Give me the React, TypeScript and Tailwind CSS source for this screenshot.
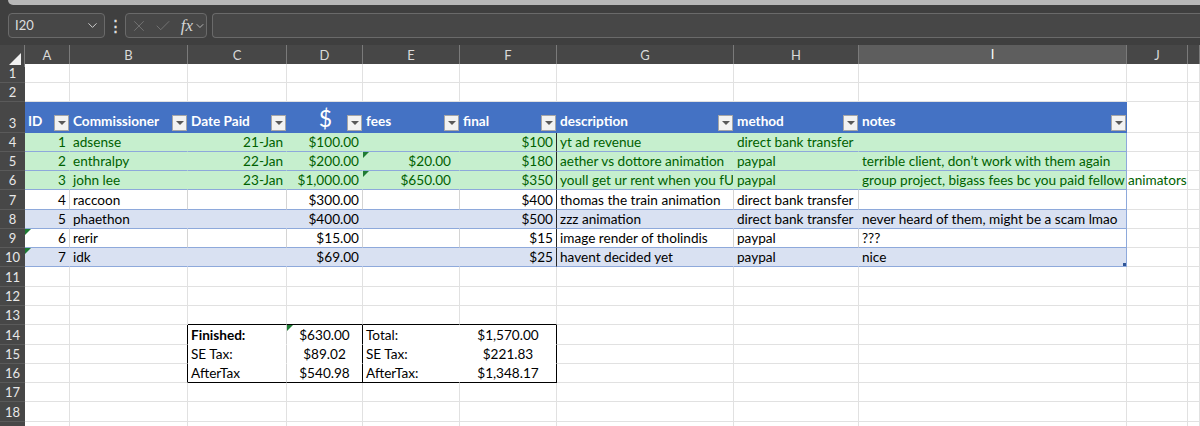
import React from "react";
import { ChevronDown, X, Check } from "lucide-react";

const GRID =
  "grid grid-cols-[25px_45px_118px_99px_76px_97px_97px_177px_125px_268px_61px_12px]";

const LETTERS = ["A", "B", "C", "D", "E", "F", "G", "H", "I", "J", ""];

type Cell = {
  text?: React.ReactNode;
  align?: "l" | "r" | "c";
  bg?: string;
  r?: string;
  b?: string;
  color?: string;
  extra?: string;
  tri?: boolean;
  spill?: boolean;
};

const GRIDLINE_R = "border-r-[#e1e1e1]";
const GRIDLINE_B = "border-b-[#e1e1e1]";

// error-indicator triangle Excel draws in the corner of a cell
const Tri = () => (
  <span className="absolute left-0 top-0 h-0 w-0 border-r-[6px] border-t-[6px] border-r-transparent border-t-[#1e7b34]" />
);

const SheetCell = ({ c }: { c: Cell }) => {
  const align =
    c.align === "r" ? "justify-end" : c.align === "c" ? "justify-center" : "justify-start";
  return (
    <div
      className={`relative flex items-end whitespace-nowrap border-b border-r px-[3px] pb-[1px] text-[13.6px] leading-[16px] ${align} ${
        c.spill ? "overflow-visible" : "overflow-hidden"
      } ${c.bg ?? "bg-white"} ${c.r ?? GRIDLINE_R} ${c.b ?? GRIDLINE_B} ${c.color ?? "text-black"} ${
        c.extra ?? ""
      }`}
    >
      {c.tri && <Tri />}
      <span className={c.spill ? "relative z-10" : ""}>{c.text}</span>
    </div>
  );
};

const RowHead = ({ n }: { n?: number }) => (
  <div className="flex items-end justify-center border-b border-b-[#5a5a5a] bg-[#474747] pb-[1px] text-[13px] leading-[16px] text-[#e8e8e8]">
    {n}
  </div>
);

const blankRow = (): Cell[] => LETTERS.map(() => ({}));

const Dropdown = () => (
  <span className="mb-[1px] mr-[1px] flex h-[16px] w-[15px] shrink-0 items-center justify-center border border-[#a6a6a6] bg-[#f2f2f2]">
    <span className="h-0 w-0 border-x-[4px] border-t-[4px] border-x-transparent border-t-[#595959]" />
  </span>
);

const headers = ["ID", "Commissioner", "Date Paid", "$", "fees", "final", "description", "method", "notes"];

interface Entry {
  n: number;
  h: string;
  kind: "green" | "white" | "band";
  id: number;
  name: string;
  date: string;
  d: string;
  e: string;
  f: string;
  g: string;
  method: string;
  notes: string;
  eTri?: boolean;
  aTri?: boolean;
}

const entries: Entry[] = [
  { n: 4, h: "h-[19px]", kind: "green", id: 1, name: "adsense", date: "21-Jan", d: "$100.00", e: "", f: "$100", g: "yt ad revenue", method: "direct bank transfer", notes: "" },
  { n: 5, h: "h-[19px]", kind: "green", id: 2, name: "enthralpy", date: "22-Jan", d: "$200.00", e: "$20.00", f: "$180", g: "aether vs dottore animation", method: "paypal", notes: "terrible client, don’t work with them again", eTri: true },
  { n: 6, h: "h-[19px]", kind: "green", id: 3, name: "john lee", date: "23-Jan", d: "$1,000.00", e: "$650.00", f: "$350", g: "youll get ur rent when you fU", method: "paypal", notes: "group project, bigass fees bc you paid fellow animators", eTri: true },
  { n: 7, h: "h-[20px]", kind: "white", id: 4, name: "raccoon", date: "", d: "$300.00", e: "", f: "$400", g: "thomas the train animation", method: "direct bank transfer", notes: "" },
  { n: 8, h: "h-[19px]", kind: "band", id: 5, name: "phaethon", date: "", d: "$400.00", e: "", f: "$500", g: "zzz animation", method: "direct bank transfer", notes: "never heard of them, might be a scam lmao" },
  { n: 9, h: "h-[19px]", kind: "white", id: 6, name: "rerir", date: "", d: "$15.00", e: "", f: "$15", g: "image render of tholindis", method: "paypal", notes: "???", aTri: true },
  { n: 10, h: "h-[19px]", kind: "band", id: 7, name: "idk", date: "", d: "$69.00", e: "", f: "$25", g: "havent decided yet", method: "paypal", notes: "nice", aTri: true },
];

const tableRow = (en: Entry): Cell[] => {
  const bg = en.kind === "green" ? "bg-[#c6efce]" : en.kind === "band" ? "bg-[#d9e1f2]" : "bg-white";
  const r = en.kind === "green" ? "border-r-[#c6efce]" : en.kind === "band" ? "border-r-[#d9e1f2]" : "border-r-[#d4d4d4]";
  const color = en.kind === "green" ? "text-[#006100]" : "text-black";
  const base = { bg, r, color, b: "border-b-[#8ea9db]" };
  return [
    { ...base, text: en.id, align: "r", tri: en.aTri },
    { ...base, text: en.name },
    { ...base, text: en.date, align: "r" },
    { ...base, text: en.d, align: "r" },
    { ...base, text: en.e, align: "r", tri: en.eTri, extra: "pr-[8px]" },
    { ...base, text: en.f, align: "r", r: "border-r-[#262626]" },
    { ...base, text: en.g },
    { ...base, text: en.method },
    {
      ...base,
      text: en.notes,
      r: "border-r-[#8ea9db]",
      spill: en.n === 6,
      extra: en.n === 10 ? "after:absolute after:bottom-0 after:right-0 after:h-[3px] after:w-[3px] after:bg-[#2f5597]" : "",
    },
    {},
    {},
  ];
};

const summary = (
  c: string,
  d: string,
  e: string,
  f: string,
  first: boolean,
  last: boolean
): Cell[] => {
  const b = last ? "border-b-black" : "border-b-white";
  return [
    {},
    { r: "border-r-black" },
    { text: c, r: "border-r-[#d4d4d4]", b, extra: first ? "font-bold" : "" },
    { text: d, align: "c", r: "border-r-black", b, tri: first },
    { text: e, r: "border-r-white", b },
    { text: f, align: "c", r: "border-r-black", b },
    {},
    {},
    {},
    {},
    {},
  ];
};

const row13 = (): Cell[] =>
  LETTERS.map((_, i) => (i >= 2 && i <= 5 ? { b: "border-b-black" } : {}));

const Row = ({ n, h, cells }: { n?: number; h: string; cells: Cell[] }) => (
  <div className={`${GRID} ${h}`}>
    <RowHead n={n} />
    {cells.map((c, i) => (
      <SheetCell key={i} c={c} />
    ))}
  </div>
);

const FormulaBar = () => (
  <div className="h-[45px] bg-[#3f3f3f]">
    <div className="h-[6px] bg-[#3f3f3f]">
      <div className="ml-[8px] h-[5px] rounded-bl-[6px] bg-[#b7b7b7]" />
    </div>
    <div className="flex h-[32px] items-end gap-[5px] pl-[8px] text-[#dedede]">
      <div className="flex h-[25px] w-[97px] items-center justify-between rounded-[4px] border border-[#6a6a6a] bg-[#474747] pl-[6px] pr-[4px] text-[13px]">
        <span>I20</span>
        <ChevronDown size={15} strokeWidth={1.6} className="text-[#cfcfcf]" />
      </div>
      <div className="flex h-[25px] w-[10px] items-center justify-center text-[15px] font-bold leading-none">⋮</div>
      <div className="flex h-[25px] w-[82px] items-center gap-[6px] rounded-[4px] border border-[#6a6a6a] bg-[#474747] pl-[4px]">
        <X size={18} strokeWidth={1.1} className="text-[#7c7c7c]" />
        <Check size={18} strokeWidth={1.1} className="text-[#7c7c7c]" />
        <span className="ml-[3px] font-['Liberation_Serif',serif] text-[17px] italic leading-none text-[#d6d6d6]">fx</span>
        <ChevronDown size={12} strokeWidth={1.6} className="-ml-[5px] text-[#cfcfcf]" />
      </div>
      <div className="h-[25px] flex-1 rounded-l-[4px] border border-r-0 border-[#6a6a6a] bg-[#474747]" />
    </div>
  </div>
);

const ColumnHeader = () => (
  <div className={`${GRID} h-[19px] bg-[#474747] text-[13px] text-[#dadada]`}>
    <div className="relative border-r border-r-[#7a7a7a]">
      <svg className="absolute bottom-[2px] right-[3px]" width="12" height="12" viewBox="0 0 12 12">
        <polygon points="12,0 12,12 0,12" fill="#f2f2f2" />
      </svg>
    </div>
    {LETTERS.map((l, i) => (
      <div
        key={i}
        className={`flex items-center justify-center border-r border-r-[#7a7a7a] ${
          l === "I" ? "border-b-2 border-b-[#1f8a4c] bg-[#5e5e5e] text-white" : ""
        }`}
      >
        {l}
      </div>
    ))}
  </div>
);

const HeaderRow = () => (
  <div className={`${GRID} h-[31px]`}>
    <RowHead n={3} />
    {headers.map((t, i) => (
      <div
        key={i}
        className="relative flex items-end justify-between border-b border-b-[#4472c4] bg-[#4472c4] pl-[3px] text-[13.6px] font-bold leading-[16px] text-white"
      >
        {t === "$" ? (
          <span className="w-full pb-[1px] pl-[14px] text-center text-[23px] font-normal leading-[26px]">$</span>
        ) : (
          <span className="whitespace-nowrap pb-[3px]">{t}</span>
        )}
        <Dropdown />
      </div>
    ))}
    <SheetCell c={{}} />
    <SheetCell c={{}} />
  </div>
);

export default function App() {
  return (
    <div className="h-[426px] w-[1200px] overflow-hidden bg-white font-['Lato','Open_Sans',sans-serif]">
      <FormulaBar />
      <ColumnHeader />
      <Row n={1} h="h-[19px]" cells={blankRow()} />
      <Row n={2} h="h-[19px]" cells={blankRow()} />
      <HeaderRow />
      {entries.map((en) => (
        <Row key={en.n} n={en.n} h={en.h} cells={tableRow(en)} />
      ))}
      <Row n={11} h="h-[20px]" cells={blankRow()} />
      <Row n={12} h="h-[19px]" cells={blankRow()} />
      <Row n={13} h="h-[19px]" cells={row13()} />
      <Row n={14} h="h-[20px]" cells={summary("Finished:", "$630.00", "Total:", "$1,570.00", true, false)} />
      <Row n={15} h="h-[19px]" cells={summary("SE Tax:", "$89.02", "SE Tax:", "$221.83", false, false)} />
      <Row n={16} h="h-[19px]" cells={summary("AfterTax", "$540.98", "AfterTax:", "$1,348.17", false, true)} />
      <Row n={17} h="h-[19px]" cells={blankRow()} />
      <Row n={18} h="h-[20px]" cells={blankRow()} />
      <Row h="h-[19px]" cells={blankRow()} />
    </div>
  );
}
